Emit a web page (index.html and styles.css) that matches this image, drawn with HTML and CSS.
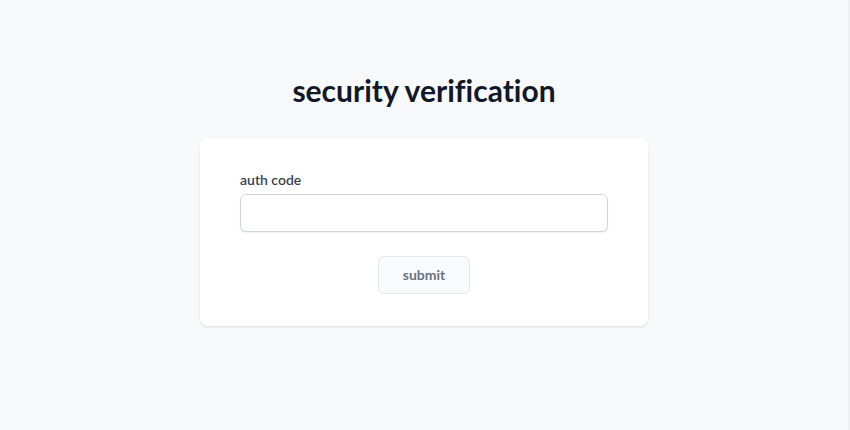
FILE: index.html
```html
<!DOCTYPE html>
<html lang="en">
<head>
<meta charset="utf-8">
<title>security verification</title>
<link rel="stylesheet" href="styles.css">
</head>
<body>
<main class="page">
  <h1 class="title">security verification</h1>
  <form class="card">
    <label class="label" for="code">auth code</label>
    <input class="input" id="code" type="text">
    <div class="actions">
      <button class="btn" type="button">submit</button>
    </div>
  </form>
</main>
</body>
</html>
```
FILE: styles.css
```css
html, body {
  margin: 0;
  padding: 0;
}
body {
  background: #f8f9fb;
  font-family: Lato, "Open Sans", sans-serif;
  width: 848px;
  height: 430px;
  border-right: 2px solid #eef0f3;
}
.page {
  display: flex;
  flex-direction: column;
  align-items: center;
  padding-top: 70px;
}
.title {
  margin: 0;
  font-size: 30px;
  line-height: 40px;
  font-weight: 700;
  color: #111827;
  font-variant-ligatures: none;
}
.card {
  margin-top: 28px;
  width: 448px;
  box-sizing: border-box;
  background: #fff;
  border-radius: 8px;
  box-shadow: 0 1px 3px rgba(0,0,0,0.08), 0 1px 2px rgba(0,0,0,0.04);
  padding: 32px 40px 32px;
  display: flex;
  flex-direction: column;
}
.label {
  font-size: 14px;
  line-height: 20px;
  font-weight: 600;
  color: #374151;
  margin-bottom: 4px;
}
.input {
  height: 38px;
  box-sizing: border-box;
  border: 1px solid #d1d5db;
  border-radius: 6px;
  box-shadow: 0 1px 2px rgba(0,0,0,0.06);
  padding: 0 12px;
  font: inherit;
}
.actions {
  display: flex;
  justify-content: center;
  margin-top: 24px;
}
.btn {
  width: 92px;
  height: 38px;
  background: #f9fafb;
  border: 1px solid #e5e7eb;
  border-radius: 6px;
  color: #6b7280;
  font-family: inherit;
  font-size: 14px;
  font-weight: 700;
  line-height: 36px;
  padding: 0 0 2px;
}
```
